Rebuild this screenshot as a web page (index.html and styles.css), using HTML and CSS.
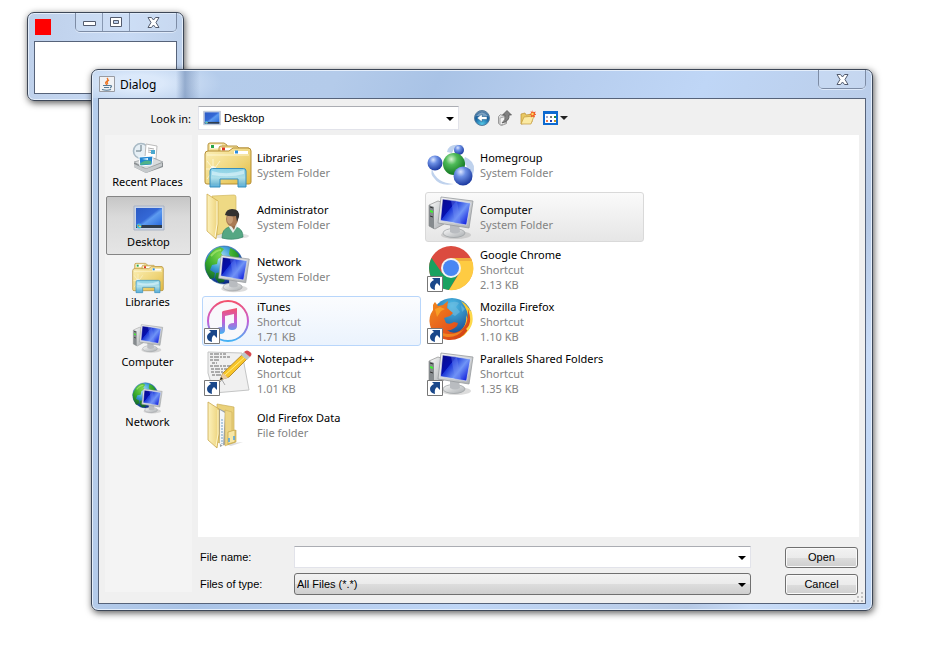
FILE: index.html
```html
<!DOCTYPE html>
<html lang="en">
<head>
<meta charset="utf-8">
<title>Dialog</title>
<link rel="stylesheet" href="styles.css">
</head>
<body>
<svg class="defs" aria-hidden="true">
  <defs>
    <linearGradient id="folderG" x1="0" y1="0" x2="1" y2="1"><stop offset="0" stop-color="#fcf0b8"/><stop offset=".6" stop-color="#eed477"/><stop offset="1" stop-color="#e2b93f"/></linearGradient>
    <linearGradient id="paneG" x1="0" y1="0" x2="1" y2="0"><stop offset="0" stop-color="#fdf2bd"/><stop offset="1" stop-color="#ecd27a"/></linearGradient>
    <linearGradient id="standG" x1="0" y1="0" x2="0" y2="1"><stop offset="0" stop-color="#7fcfec"/><stop offset=".5" stop-color="#a9e0f2"/><stop offset="1" stop-color="#4fa9d5"/></linearGradient>
    <linearGradient id="screenG" x1="0" y1="0" x2="1" y2=".7"><stop offset="0" stop-color="#0a0a86"/><stop offset=".38" stop-color="#0510b0"/><stop offset=".4" stop-color="#1a36d8"/><stop offset=".7" stop-color="#7095f6"/><stop offset="1" stop-color="#1a2be0"/></linearGradient>
    <linearGradient id="greyG" x1="0" y1="0" x2="1" y2="1"><stop offset="0" stop-color="#fafafa"/><stop offset="1" stop-color="#a9adb0"/></linearGradient>
    <radialGradient id="globeG" cx=".4" cy=".3" r=".7"><stop offset="0" stop-color="#b5e8fb"/><stop offset=".45" stop-color="#3a9bd6"/><stop offset="1" stop-color="#0a2480"/></radialGradient>
    <radialGradient id="landG" gradientUnits="userSpaceOnUse" cx="16" cy="10" r="28"><stop offset="0" stop-color="#7ed84e"/><stop offset=".5" stop-color="#35a82c"/><stop offset="1" stop-color="#0d5a2c"/></radialGradient>
    <radialGradient id="blueBall" cx=".38" cy=".28" r=".75"><stop offset="0" stop-color="#dbe6ff"/><stop offset=".35" stop-color="#6c8fe4"/><stop offset="1" stop-color="#16349c"/></radialGradient>
    <radialGradient id="greenBall" cx=".38" cy=".28" r=".75"><stop offset="0" stop-color="#d9f5d4"/><stop offset=".35" stop-color="#4dba57"/><stop offset="1" stop-color="#0c701c"/></radialGradient>
    <linearGradient id="deskG" x1="0" y1="0" x2="1" y2="1"><stop offset="0" stop-color="#2b5ac4"/><stop offset=".45" stop-color="#3468d6"/><stop offset=".55" stop-color="#5d9bf0"/><stop offset="1" stop-color="#1f61d8"/></linearGradient>
    <linearGradient id="ringG" x1="0" y1="0" x2="0" y2="1"><stop offset="0" stop-color="#f4526c"/><stop offset=".5" stop-color="#c55ed6"/><stop offset="1" stop-color="#42b2f4"/></linearGradient>
    <radialGradient id="foxBlue" cx=".5" cy=".2" r=".8"><stop offset="0" stop-color="#4cc0ea"/><stop offset="1" stop-color="#123e86"/></radialGradient>
    <linearGradient id="foxG" x1="0" y1="0" x2="1" y2="1"><stop offset="0" stop-color="#f28a1e"/><stop offset=".6" stop-color="#e4561b"/><stop offset="1" stop-color="#c93b14"/></linearGradient>
    <radialGradient id="backG" cx=".5" cy=".9" r=".9"><stop offset="0" stop-color="#55c9e8"/><stop offset=".6" stop-color="#145f9f"/><stop offset="1" stop-color="#6d8dac"/></radialGradient>

    <symbol id="libraries" viewBox="0 0 48 48">
      <path d="M4 11V4q0-2 2-2h14l3 2v8z" fill="#f4e09a" stroke="#b89642"/>
      <path d="M6 3.500h12v4H6z" fill="#fff"/><path d="M7 4h3v3H7z" fill="#2aa54a"/>
      <path d="M15 12V7q0-2 2-2h16l2 2h10l1 2v6z" fill="#f4e09a" stroke="#b89642"/>
      <path d="M17 7h14v3H17z" fill="#fff"/><path d="M18 6.500h3v3h-3z" fill="#db3524"/>
      <path d="M1 13q0-3 3-3h21l4-3h15q3 0 3 3v31q0 2-2 2H3q-2 0-2-2z" fill="url(#folderG)" stroke="#b58e35"/>
      <path d="M30 10h14v3H30z" fill="#fff"/><path d="M31 9.500h3v3h-3z" fill="#2a8ddf"/>
      <path d="M3 14h42" stroke="#fffbe0" opacity=".8"/>
      <path d="M9 18v21M2 28h18M3 20l14 17M16 20L3 38" stroke="#fffef0" stroke-width=".8" opacity=".8"/><circle cx="9" cy="28" r="3" fill="#fff" opacity=".7"/>
      <path d="M6 46V30q0-2.500 2.500-2.500h31q2.500 0 2.500 2.500v16h-8v-8H16v8z" fill="url(#standG)" fill-opacity=".93" stroke="#378ebd"/>
      <path d="M8 30q16 5 32-1v4q-14 4-32 1z" fill="#edfcff" opacity=".5"/>
    </symbol>

    <symbol id="monitor" viewBox="0 0 48 48">
      <ellipse cx="29" cy="42" rx="15" ry="4" fill="#8c8c8c" opacity=".3"/>
      <ellipse cx="27" cy="40" rx="11" ry="4.500" fill="url(#greyG)" stroke="#9a9da0" stroke-width=".7"/>
      <path d="M23 31h9l1 8q-5 3-10 0z" fill="#b9bcc0"/>
      <path d="M14 4l32 4-4 27-31-5z" fill="url(#greyG)" stroke="#96999d" stroke-width=".8"/>
      <path d="M15.500 6l28 4-4 22-26-4.500z" fill="url(#screenG)" stroke="#eceef0" stroke-width=".6"/>
      <path d="M24 7.300l6 .8 4 23-6-1z" fill="#708cf5" opacity=".4"/>
    </symbol>
    <symbol id="computer" viewBox="0 0 48 48">
      <path d="M2 12l9-4 6 2v21L8 36l-6-3z" fill="url(#greyG)" stroke="#999" stroke-width=".8"/>
      <path d="M2 12l5 2v22l-5-3z" fill="#858a8d"/><path d="M3 17l3 1v2l-3-1z" fill="#3cf52d"/><path d="M3 14l3 1M3 23l3 1" stroke="#333"/>
      <use href="#monitor" width="48" height="48"/>
    </symbol>
    <symbol id="network" viewBox="0 0 48 48">
      <circle cx="20" cy="20" r="19" fill="url(#globeG)" stroke="#2c5da0" stroke-width=".6"/>
      <path d="M4 12q4-8 12-10l4 2-3 4 2 3-5 3-1 5-5 1-2 5 5 3-1 5-4 1-4-8-1-8z" fill="url(#landG)"/>
      <path d="M26 3q6 2 9 7l-1 5-6-1-3-5zM12 28l6-1 4 4-2 6-5 1-4-5z" fill="url(#landG)"/>
      <path d="M7 11q5-6 10-6" stroke="#b5ef76" stroke-width="2" fill="none" opacity=".6"/>
      <use href="#monitor" x="5" y="7" width="42" height="42"/>
    </symbol>
    <symbol id="desktop" viewBox="0 0 32 32">
      <path d="M1 4h30v24H1z" fill="#c9d5e8" stroke="#a9b3c4"/>
      <path d="M3 6h26v20H3z" fill="url(#deskG)"/><path d="M3 23h26v3H3z" fill="#303d4c"/>
      <circle cx="6" cy="24" r="2.500" fill="#48b8d8"/><path d="M5 23h1v1H5z" fill="#f36b2b"/><path d="M6 24h2v1H6z" fill="#f9dc45"/>
    </symbol>
    <symbol id="recent" viewBox="0 0 32 32">
      <circle cx="9" cy="9" r="7.500" fill="#e6eff5" stroke="#a9bac5" stroke-width="1.600"/><path d="M9 3v6H4" stroke="#60747f" fill="none"/>
      <path d="M14 2l11 2-1 13-11-2z" fill="#fff" stroke="#bbb"/><path d="M16 6l6 1M16 8l6 1M16 10l6 1" stroke="#999" stroke-width=".8"/><path d="M19 8h4v4h-4z" fill="#4aa8cf"/>
      <path d="M2 21l17-5 12 5v4l-17 6-12-6z" fill="#888d90"/><path d="M2 20l17-5 12 5-17 7z" fill="#d9dcdd" stroke="#92979a" stroke-width=".7"/>
      <path d="M7 15l14-1-1 9-12 1z" fill="#2287d2" stroke="#fff"/><path d="M8 22q4-5 11-3v3l-11 1z" fill="#4fb38a"/><path d="M10 17l6-1v2z" fill="#dff6ff"/>
      <path d="M2 22l12 5v4l-12-6zM14 27l16-6v3l-16 7z" fill="#c6cacc"/>
    </symbol>
    <symbol id="admin" viewBox="0 0 48 48">
      <ellipse cx="27" cy="43" rx="18" ry="3" fill="#777" opacity=".22"/>
      <path d="M8 3l22-1q2 0 2 2v32l-19 6z" fill="#eed984" stroke="#d1b75f" stroke-width=".7"/>
      <path d="M3 1l11 7v23l-2 15-9-8z" fill="url(#paneG)" stroke="#cfad52" stroke-width=".8"/>
      <path d="M13 8v23l-2 13" stroke="#fffadc" fill="none"/>
      <path d="M18 45q0-9 7-11h7q7 2 7 10-10 4-21 1z" fill="#55a783" stroke="#348465" stroke-width=".7"/>
      <path d="M25 34l4 6 4-6v-4h-7z" fill="#e8ede9"/><path d="M26 31h6l-2 6z" fill="#946948"/>
      <ellipse cx="28" cy="26" rx="6" ry="7.500" fill="#aa7b55"/><ellipse cx="26" cy="26" rx="3" ry="5" fill="#d9b28a" opacity=".6"/>
      <path d="M21 22q1-6 7-6 8 0 7 8l-2 5-1-6q-6 1-11-1z" fill="#333130"/>
    </symbol>
    <symbol id="homegroup" viewBox="0 -4 48 48">
      <path d="M20 7Q22-3 37 1q-10-1-12 7zM38 12q10 4 9 13-1 8-7 10 5-10-4-18zM5 24q4 14 22 15-14 3-20-6-4-4-2-9z" fill="#a9c3e7" opacity=".75"/>
      <circle cx="32" cy="5" r="5" fill="url(#blueBall)"/><circle cx="8" cy="18" r="7.500" fill="url(#blueBall)"/>
      <circle cx="27" cy="19" r="11" fill="url(#greenBall)"/><circle cx="36" cy="31" r="9.500" fill="url(#blueBall)"/>
    </symbol>
    <symbol id="arrowbox" viewBox="0 0 16 16">
      <path d="M.5 .5h15v15H.5z" fill="#fff" stroke="#777"/>
      <path d="M5 2h8v8l-3-3q-3 2-2 7-5-1-5-5 0-3 4-5z" fill="#19478a"/>
    </symbol>
    <symbol id="chrome" viewBox="0 0 48 48">
      <circle cx="24" cy="23" r="22" fill="#db4b3f"/>
      <path d="M4.500 13A22 22 0 0 0 22 45l10-17-8 4-9-4z" fill="#19a160"/>
      <path d="M24 13h20A22 22 0 0 1 22 45l10.500-17z" fill="#fecb42"/>
      <path d="M24 13h20l1 3H25z" fill="#c9532a" opacity=".25"/>
      <circle cx="24" cy="23" r="10" fill="#f2f3f2"/><circle cx="24" cy="23" r="8" fill="#4987f2"/>
      <use href="#arrowbox" y="31" width="16" height="16"/>
    </symbol>
    <symbol id="itunes" viewBox="0 0 48 48">
      <circle cx="24" cy="24" r="20" fill="#f8f8fb" stroke="url(#ringG)" stroke-width="2"/>
      <path d="M19 14l14-3v18q0 4-5 4-4 0-4-3 0-4 6-4V17l-9 2v14q0 4-5 4-4 0-4-3 0-4 6-4V15z" fill="url(#ringG)"/>
      <use href="#arrowbox" y="31" width="16" height="16"/>
    </symbol>
    <symbol id="firefox" viewBox="0 0 48 48">
      <circle cx="25" cy="21" r="20" fill="url(#foxBlue)"/>
      <path d="M20 7q7-4 12-1l-3 4 4 5-5 4-5-3zM34 8l4 4-3 3z" fill="#73bddf" opacity=".6"/>
      <path d="M34 4q11 6 11 18-1 13-12 19l-9-2q17-6 15-21l2 5q1-9-7-19z" fill="#fcc72c"/>
      <path d="M41 12q6 13-1 22-7 10-19 9Q6 41 3 28q-2-8 3-15V8q1-2 2-3l3 4 5-1 5-4-1 7 6 5-3 3-6 2 2 5q4 2 8-1l4 1-1 3q-5 5-10 4 7 6 15-1 6-5 6-16z" fill="url(#foxG)"/>
      <path d="M8 12l5-2 5 2-4 2-4 6z" fill="#ffb32b" opacity=".65"/><path d="M37 32q-7 9-17 8-7-1-11-7 7 4 13 4 9 0 15-5z" fill="#f69a23" opacity=".7"/>
      <path d="M43 14q4 12-3 19" fill="none" stroke="#fdd94b" stroke-width="2.500"/>
      <use href="#arrowbox" y="31" width="16" height="16"/>
    </symbol>
    <symbol id="notepad" viewBox="0 0 48 48">
      <path d="M4 3l34 1 7 37-35 3-6-20z" fill="#f0f0f0" stroke="#c4c5c5"/>
      <path d="M6 5h16M6 8h20M6 11h10M6 17h21M7 20h18M7 23h19M8 26h16M8 14h5" stroke="#666" stroke-width="1" stroke-dasharray="3 1 5 1 2 1"/>
      <path d="M16 31l3-7L40 4l5 4-20 20z" fill="#f8c529" stroke="#a67818" stroke-width=".8"/>
      <path d="M21 26L42 7" stroke="#fff087"/><path d="M16 31l3-7 5 5z" fill="#e8c8a0"/><path d="M16 31l1-3 2 2z" fill="#222"/>
      <path d="M37 6l3-3 6 5-3 3z" fill="#bdc6ca"/><path d="M40 3q3-3 6 0 3 2 0 5z" fill="#d6494f"/>
      <path d="M13 36l5-5 3 5" stroke="#aaa" fill="none"/>
      <use href="#arrowbox" y="31" width="16" height="16"/>
    </symbol>
    <symbol id="oldfolder" viewBox="0 0 48 48">
      <path d="M20 43l19-2-12 4z" fill="#777" opacity=".25"/>
      <path d="M13 3l17 3v24l2-1v12l-9 3-10-3z" fill="#ead17a" stroke="#caae58" stroke-width=".7"/>
      <path d="M14 7l8 4v32l-6 3z" fill="#9aa0a6"/><path d="M16 9l5 3-2 33-3-2z" fill="#f4f6f8"/><path d="M18 18v25" stroke="#6fa0c7" stroke-dasharray="2 1"/>
      <path d="M21 9l7 2v30l-7 4z" fill="#edd585" stroke="#ceb058" stroke-width=".6"/>
      <path d="M24 31l7-2v12l-7 2z" fill="#f7e7a7" stroke="#c4a342" stroke-width=".7"/><path d="M25 37v4M30 35v4" stroke="#4ea3e0" stroke-width="1.500"/>
      <path d="M4 1l11 7v25l-2 14L4 39z" fill="url(#paneG)" stroke="#caa84e" stroke-width=".8"/><path d="M14 9v24l-2 12" stroke="#fff6c9" fill="none"/>
    </symbol>
    <symbol id="parallels" viewBox="0 0 48 48">
      <use href="#computer" width="48" height="48"/><use href="#arrowbox" y="31" width="16" height="16"/>
    </symbol>
    <symbol id="closex" viewBox="0 0 13 11">
      <path d="M1 .5h3.500l2 2.500 2-2.500H12L9 5.500l3 5H8.500l-2-2.500-2 2.500H1l3-5z" fill="#fff" stroke="#535b6d"/>
    </symbol>
  </defs>
</svg>

<section class="frame small-window" aria-label="Window">
  <header class="caption">
    <span class="red-icon"></span>
    <div class="controls">
      <button type="button" class="low" aria-label="Minimize"><svg width="13" height="6"><path d="M.5.500h12v4H.5z" fill="#fff" stroke="#535b6d"/></svg></button>
      <button type="button" aria-label="Maximize"><svg width="12" height="10"><path d="M.5.500h11v9H.5z" fill="#fff" stroke="#535b6d"/><path d="M3.500 3.500h5v3h-5z" fill="#bcd0ee" stroke="#535b6d"/></svg></button>
      <button type="button" class="wide" aria-label="Close"><svg width="13" height="11"><use href="#closex"/></svg></button>
    </div>
  </header>
  <div class="blank"></div>
</section>

<main class="frame dialog" role="dialog" aria-labelledby="title">
  <header class="caption">
    <svg class="java" width="16" height="16" viewBox="0 0 16 16"><path d="M.5.500h15v15H.5z" fill="#f0f2f5" stroke="#989ba2"/><path d="M8 2q2 2-1 4-1 1 1 3M10 4q-3 2-1 4" fill="none" stroke="#ee7422" stroke-width="1.300"/><path d="M4 9.500h7q3 0 0 2.500M5 11.500h5M3 13.500q5 1.500 9 0" fill="none" stroke="#557995" stroke-width="1.200"/></svg>
    <h1 id="title">Dialog</h1>
    <div class="controls"><button type="button" class="wide" aria-label="Close"><svg width="13" height="11"><use href="#closex"/></svg></button></div>
  </header>

  <form class="client">
    <div class="toolbar">
      <label for="look">Look in:</label>
      <div class="combo look">
        <svg class="lead" width="18" height="18"><use href="#desktop"/></svg>
        <select id="look"><option>Desktop</option></select>
        <svg class="arrow" width="8" height="4"><path d="M0 0h8L4 4z"/></svg>
      </div>
      <div class="tools">
        <button type="button" aria-label="Back"><svg width="16" height="16" viewBox="0 0 16 16"><circle cx="8" cy="8" r="7.500" fill="url(#backG)" stroke="#557c9d"/><path d="M2 6q6-7 12 0z" fill="#c5d3df" opacity=".5"/><path d="M3 8l5-4v2.500h5v3H8V12z" fill="#fff" stroke="#205a88" stroke-width=".5"/></svg></button>
        <button type="button" aria-label="Up One Level"><svg width="16" height="16" viewBox="0 0 16 16"><path d="M1.500 6.500l2-2 2 1 4-1v9l-5 2-3-2z" fill="#dcdcdc" stroke="#9a9a9a"/><path d="M3 8l7-2-2 8-5 1z" fill="#f4f4f4" stroke="#aaa"/><path d="M5 13q4-3 3-8H5.500L10 .5 14.500 5H12q1 6-7 8z" fill="#818181" stroke="#4c4c4c" stroke-width=".7"/></svg></button>
        <button type="button" aria-label="Create New Folder"><svg width="16" height="16" viewBox="0 0 16 16"><path d="M1 14V4l4-1 1 2 6-1v8z" fill="#e8c862" stroke="#bb9133" stroke-width=".7"/><path d="M1 14l3-7 10-1-3 8z" fill="#fbeaa3" stroke="#c39a3c" stroke-width=".7"/><path d="M12.500 0l1 2.200 2.200-.8-.8 2.100 1.600 1-2 .8.500 2.200-2.200-1-2 1 .5-2.200-2-1 2-1-.7-2.100 2 .7z" fill="#f15a24"/><circle cx="12.500" cy="4" r="1.200" fill="#ffd95c"/></svg></button>
        <button type="button" aria-label="View Menu"><svg width="25" height="14" viewBox="0 0 25 14"><path d="M1 1h13v12H1z" fill="#fff" stroke="#0d6ad0" stroke-width="2"/><path d="M0 0h15v3H0z" fill="#0d6ad0"/><path d="M3 5h2v2H3z" fill="#a6aaca"/><path d="M7 5h2v2H7z" fill="#777"/><path d="M11 5h2v2h-2z" fill="#228b38"/><path d="M3 9h2v2H3z" fill="#ef7b4a"/><path d="M7 9h2v2H7z" fill="#2040b8"/><path d="M11 9h2v2h-2z" fill="#c79b28"/><path d="M17 5h8l-4 4z" fill="#222"/></svg></button>
      </div>
    </div>

    <div class="body">
      <nav class="places" aria-label="Places">
        <button type="button"><svg width="32" height="32"><use href="#recent"/></svg>Recent Places</button>
        <button type="button" class="current"><svg width="32" height="32"><use href="#desktop"/></svg>Desktop</button>
        <button type="button"><svg width="32" height="32"><use href="#libraries"/></svg>Libraries</button>
        <button type="button"><svg width="32" height="32"><use href="#computer"/></svg>Computer</button>
        <button type="button"><svg width="32" height="32"><use href="#network"/></svg>Network</button>
      </nav>

      <div class="content">
        <ul class="files">
          <li><svg width="48" height="48"><use href="#libraries"/></svg><p><b>Libraries</b><span>System Folder</span></p></li>
          <li><svg width="48" height="48"><use href="#homegroup"/></svg><p><b>Homegroup</b><span>System Folder</span></p></li>
          <li><svg width="48" height="48"><use href="#admin"/></svg><p><b>Administrator</b><span>System Folder</span></p></li>
          <li class="selected"><svg width="48" height="48"><use href="#computer"/></svg><p><b>Computer</b><span>System Folder</span></p></li>
          <li><svg width="48" height="48"><use href="#network"/></svg><p><b>Network</b><span>System Folder</span></p></li>
          <li><svg width="48" height="48"><use href="#chrome"/></svg><p><b>Google Chrome</b><span>Shortcut</span><span>2.13 KB</span></p></li>
          <li class="hover"><svg width="48" height="48"><use href="#itunes"/></svg><p><b>iTunes</b><span>Shortcut</span><span>1.71 KB</span></p></li>
          <li><svg width="48" height="48"><use href="#firefox"/></svg><p><b>Mozilla Firefox</b><span>Shortcut</span><span>1.10 KB</span></p></li>
          <li><svg width="48" height="48"><use href="#notepad"/></svg><p><b>Notepad++</b><span>Shortcut</span><span>1.01 KB</span></p></li>
          <li><svg width="48" height="48"><use href="#parallels"/></svg><p><b>Parallels Shared Folders</b><span>Shortcut</span><span>1.35 KB</span></p></li>
          <li><svg width="48" height="48"><use href="#oldfolder"/></svg><p><b>Old Firefox Data</b><span>File folder</span></p></li>
        </ul>
        <div class="fields">
          <label for="name">File name:</label>
          <div class="combo"><input id="name" type="text"><svg class="arrow" width="8" height="4"><path d="M0 0h8L4 4z"/></svg></div>
          <button type="submit">Open</button>
          <label for="type">Files of type:</label>
          <div class="combo raised"><select id="type"><option>All Files (*.*)</option></select><svg class="arrow" width="8" height="4"><path d="M0 0h8L4 4z"/></svg></div>
          <button type="button">Cancel</button>
        </div>
      </div>
    </div>
    <svg class="grip" width="10" height="10" aria-hidden="true"><path d="M8 0h2v2H8zM4 4h2v2H4zM8 4h2v2H8zM0 8h2v2H0zM4 8h2v2H4zM8 8h2v2H8z" fill="#c3c3c3"/></svg>
  </form>
</main>
</body>
</html>
```
FILE: styles.css
```css
* { box-sizing: border-box; }

body {
  margin: 0;
  padding: 69px 56px 32px 91px;
  background: #fff;
  color: #000;
  font: 11px/15px "Noto Sans", "Open Sans", sans-serif;
}

button, input, select { font: inherit; color: inherit; margin: 0; }
svg { display: block; flex: none; }
.defs { position: absolute; width: 0; height: 0; }

/* Glass window frames */
.frame {
  position: relative;
  border: 1px solid #3d4757;
  border-radius: 7px;
  padding: 0 6px 6px;
  background: #bdd3f1;
  box-shadow: inset 0 0 0 1px #e4eefb, 1px 2px 7px rgba(0, 0, 0, .65);
}

.small-window {
  position: absolute;
  left: 27px;
  top: 12px;
  width: 157px;
  background: linear-gradient(100deg, #bed0ea, #c8daf4 60%, #bccfe9);
}

.dialog {
  background:
    linear-gradient(90deg, transparent 84px, rgba(110, 138, 180, .6) 93px, transparent 108px) 0 0 / 100% 28px no-repeat,
    radial-gradient(ellipse 84px 26px at 46px 13px, rgba(232, 242, 255, .75) 30%, transparent) 0 0 / 100% 28px no-repeat,
    linear-gradient(115deg, #b5cdec 0%, #b4cbea 24%, #a9c3e6 34%, #b6cdee 46%, #bfd6f6 60%, #bbceea 76%, #b6c9e5 82%, #c9dcf7 88%, #b9d2f3 100%);
}

.caption { display: flex; height: 28px; align-items: center; }
.caption h1 { margin: 0 0 0 5px; font: 12px/17px "Noto Sans", "Open Sans", sans-serif; }
.java { margin-left: 1px; }
.red-icon { width: 16px; height: 16px; margin-left: 1px; background: #f00; }

.controls {
  display: flex;
  align-self: flex-start;
  margin-left: auto;
  border: 1px solid #7d8ca5;
  border-top: 0;
  border-radius: 0 0 5px 5px;
  box-shadow: 0 1px 0 #dfeafa;
}
.controls button {
  display: flex;
  align-items: center;
  justify-content: center;
  width: 27px;
  height: 18px;
  padding: 0;
  border: 0;
  border-right: 1px solid #8898b2;
  background: rgba(213, 227, 248, .4);
}
.controls .low { padding-top: 4px; }
.controls .wide { width: 46px; border-right: 0; }

.blank { height: 53px; border: 1px solid #56637a; background: #fff; }

/* Dialog contents */
.client {
  position: relative;
  padding: 7px 6px 8px;
  border: 1px solid #56637a;
  background: #f0f0f0;
  font-family: "Liberation Sans", sans-serif;
}

.toolbar { display: flex; align-items: center; height: 24px; margin-bottom: 5px; }
.toolbar label {
  width: 86px;
  margin-right: 7px;
  text-align: right;
  font-family: "Noto Sans", "Open Sans", sans-serif;
}

.combo { position: relative; height: 22px; background: #fff; border: 1px solid #e2e3ea; border-top-color: #abadb3; }
.combo input, .combo select {
  display: block;
  appearance: none;
  width: 100%;
  height: 20px;
  padding: 0 20px 0 2px;
  border: 0;
  outline: 0;
  background: transparent;
}
.combo .arrow { position: absolute; right: 4px; top: 9px; pointer-events: none; }
.look { width: 261px; height: 24px; }
.look select { height: 22px; padding-left: 25px; }
.look .lead { position: absolute; left: 4px; top: 2px; }
.look .arrow { top: 10px; }
.raised {
  border: 1px solid #707070;
  border-radius: 3px;
  background: linear-gradient(#f2f2f2, #ebebeb 50%, #dddddd 50%, #cfcfcf);
}

.tools { display: flex; align-items: center; gap: 7px; margin-left: 15px; }
.tools button { padding: 0; border: 0; background: none; }

.body { display: grid; grid-template-columns: 87px minmax(0, 1fr); gap: 6px; }

.places {
  display: flex;
  flex-direction: column;
  gap: 1px;
  margin-bottom: 3px;
  padding: 1px;
  background: #f4f4f4;
  font-family: "Noto Sans", "Open Sans", sans-serif;
}
.places button {
  display: flex;
  flex-direction: column;
  align-items: center;
  height: 59px;
  padding: 5px 2px 0 0;
  border: 1px solid transparent;
  border-radius: 2px;
  background: none;
  white-space: nowrap;
}
.places .current {
  padding: 5px 0 0;
  border-color: #858585;
  background: linear-gradient(#c6c6c6, #dadada 35%, #e5e5e5);
}

.files {
  display: grid;
  grid-template-columns: repeat(2, 219px);
  grid-auto-rows: 50px;
  align-content: start;
  gap: 2px 4px;
  min-height: 402px;
  margin: 0 0 9px;
  padding: 5px 4px;
  list-style: none;
  background: #fff;
  font-family: "Noto Sans", "Open Sans", sans-serif;
}
.files li {
  display: flex;
  align-items: center;
  gap: 5px;
  padding-left: 1px;
  border: 1px solid transparent;
  border-radius: 3px;
  white-space: nowrap;
}
.files p { margin: 0; }
.files b, .files span { display: block; font-weight: normal; }
.files span { color: #838383; }
.files .selected { border-color: #d9d9d9; background: linear-gradient(#fafafa, #e6e6e6); }
.files .hover { border-color: #b8d6fb; background: linear-gradient(#fbfcfe, #ebf3fd); }

.fields {
  display: grid;
  grid-template-columns: 90px minmax(0, 1fr) 73px;
  align-items: center;
  row-gap: 5px;
  padding: 0 1px 0 2px;
  column-gap: 4px;
}
.fields .combo { margin-right: 30px; }
.fields button {
  height: 21px;
  padding: 0;
  border: 1px solid #707070;
  border-radius: 3px;
  background: linear-gradient(#f2f2f2, #ebebeb 50%, #dddddd 50%, #cfcfcf);
  box-shadow: inset 0 0 0 1px #fafafa;
}

.grip { position: absolute; right: 2px; bottom: 1px; }
```
